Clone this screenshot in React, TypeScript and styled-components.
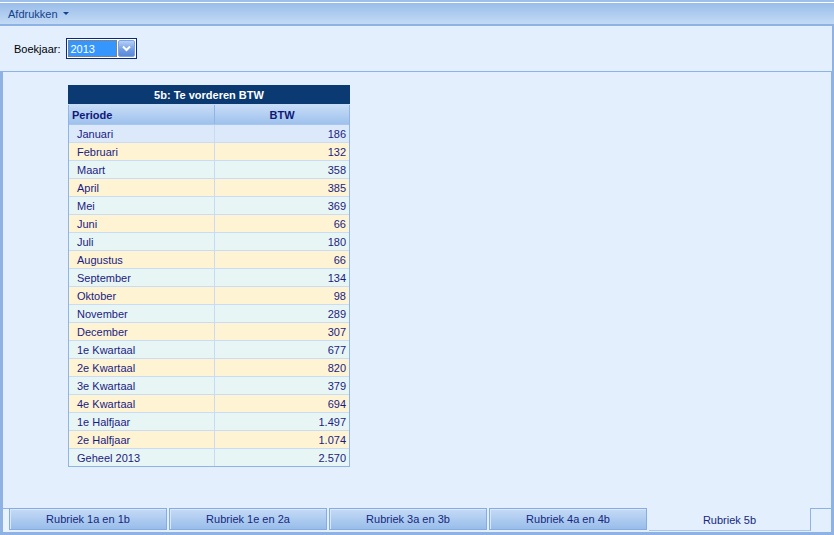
import React from "react";
import styled, { createGlobalStyle } from "styled-components";

const GlobalStyle = createGlobalStyle`
  html, body {
    margin: 0;
    padding: 0;
  }
  body {
    font-family: "Liberation Sans", Arial, sans-serif;
    font-size: 11px;
  }
`;

const Window = styled.div`
  width: 834px;
  height: 535px;
  display: flex;
  flex-direction: column;
  background-color: #e3effd;
  overflow: hidden;
`;

const Toolbar = styled.div`
  height: 21px;
  border-top: 2px solid #9dbfea;
  border-bottom: 2px solid #8db2e3;
  box-shadow: inset 0 1px 0 #ffffff;
  padding-top: 1px;
  display: flex;
  align-items: center;
  padding-left: 8px;
  background: linear-gradient(#97bce9, #c3daf5);
`;

const MenuButton = styled.div`
  display: flex;
  align-items: center;
  gap: 5px;
  color: #15428b;
  font-size: 11px;
`;

const Caret = styled.span`
  width: 0;
  height: 0;
  border-left: 3px solid transparent;
  border-right: 3px solid transparent;
  border-top: 3px solid #15428b;
`;

const FilterBar = styled.div`
  height: 45px;
  border-bottom: 1px solid #8db2e3;
  border-right: 2px solid #8db2e3;
  display: flex;
  align-items: center;
  padding-left: 14px;
  gap: 6px;
  color: #000;
`;

const Combo = styled.div`
  display: flex;
  width: 67px;
  height: 17px;
  border: 1px solid #0a2a7a;
  background: #ffffff;
  padding: 1px;
  gap: 1px;
`;

const ComboValue = styled.div`
  flex: 1;
  display: flex;
  align-items: center;
  padding-left: 2px;
  background: #3597fe;
  color: #ffffff;
  outline: 1px dotted #c07020;
  outline-offset: -1px;
`;

const ComboButton = styled.div`
  width: 17px;
  display: flex;
  align-items: center;
  justify-content: center;
  border: 1px solid #7da3e0;
  box-sizing: border-box;
  border-radius: 2px;
  background: linear-gradient(#b4d0f6, #6f9be3 60%, #5a88d8);
`;

const Content = styled.div`
  flex: 1;
  border-left: 3px solid #8db2e3;
  border-right: 3px solid #8db2e3;
  padding: 13px 0 0 65px;
`;

const Grid = styled.div`
  width: 282px;
  box-sizing: border-box;
  border: 1px solid #8fb4e6;
  border-top: none;
`;

const Title = styled.div`
  height: 19px;
  margin: 0 -1px;
  display: flex;
  align-items: center;
  justify-content: center;
  background: #0b3a73;
  color: #ffffff;
  font-weight: bold;
  border-bottom: 1px solid #c7dcf6;
`;

const Row = styled.div<{ $bg: string }>`
  display: grid;
  grid-template-columns: 146px 1fr;
  height: 17px;
  border-bottom: 1px solid #cadcf3;
  background: ${(p) => p.$bg};
  &:last-child {
    border-bottom: none;
  }
`;

const HeadRow = styled.div`
  display: grid;
  grid-template-columns: 146px 1fr;
  height: 19px;
  background: linear-gradient(#c8ddf7, #9ec1ec);
  border-bottom: 1px solid #a8c6ee;
`;

const HeadCell = styled.div<{ $center?: boolean }>`
  display: flex;
  align-items: center;
  justify-content: ${(p) => (p.$center ? "center" : "flex-start")};
  padding-left: ${(p) => (p.$center ? "0" : "3px")};
  font-weight: bold;
  color: #10187a;
  border-right: 1px solid #8fb4e6;
  &:last-child {
    border-right: none;
  }
`;

const Cell = styled.div<{ $num?: boolean }>`
  display: flex;
  align-items: center;
  justify-content: ${(p) => (p.$num ? "flex-end" : "flex-start")};
  padding: 0 3px 0 8px;
  color: #1a1c82;
  border-right: 1px solid #c8dbf3;
  &:last-child {
    border-right: none;
  }
`;

const TabStrip = styled.div`
  height: 24px;
  display: flex;
  border-left: 3px solid #8db2e3;
  border-right: 3px solid #8db2e3;
  border-bottom: 3px solid #8db2e3;
`;

const TabLead = styled.div<{ $grow?: boolean }>`
  width: 6px;
  flex: ${(p) => (p.$grow ? 1 : "none")};
  border-top: 1px solid #8db2e3;
  background: ${(p) => (p.$grow ? "#e3effd" : "#eaf3fd")};
`;

const Tab = styled.div<{ $active?: boolean }>`
  width: ${(p) => (p.$active ? "162px" : "158px")};
  height: ${(p) => (p.$active ? "23px" : "22px")};
  margin-right: ${(p) => (p.$active ? "0" : "2px")};
  box-sizing: border-box;
  display: flex;
  align-items: center;
  justify-content: center;
  color: #15287e;
  ${(p) =>
    p.$active
      ? `
    background: #e3effd;
    border-right: 1px solid #8db2e3;
    border-bottom: 1px solid #a9c6ee;
    padding-top: 2px;
  `
      : `
    background: linear-gradient(#c5dbf6, #98bdea);
    border: 1px solid #86ade3;
    box-shadow: inset 1px 1px 0 #d8e7fa;
  `}
`;

const rows: [string, string][] = [
  ["Januari", "186"],
  ["Februari", "132"],
  ["Maart", "358"],
  ["April", "385"],
  ["Mei", "369"],
  ["Juni", "66"],
  ["Juli", "180"],
  ["Augustus", "66"],
  ["September", "134"],
  ["Oktober", "98"],
  ["November", "289"],
  ["December", "307"],
  ["1e Kwartaal", "677"],
  ["2e Kwartaal", "820"],
  ["3e Kwartaal", "379"],
  ["4e Kwartaal", "694"],
  ["1e Halfjaar", "1.497"],
  ["2e Halfjaar", "1.074"],
  ["Geheel 2013", "2.570"],
];

const tabs = [
  "Rubriek 1a en 1b",
  "Rubriek 1e en 2a",
  "Rubriek 3a en 3b",
  "Rubriek 4a en 4b",
];

const rowColor = (i: number) =>
  i === 0 ? "#dce9fb" : i % 2 === 1 ? "#fef3d2" : "#e8f5f5";

const App: React.FC = () => {
  return (
    <Window>
      <GlobalStyle />
      <Toolbar>
        <MenuButton>
          Afdrukken <Caret />
        </MenuButton>
      </Toolbar>
      <FilterBar>
        <span>Boekjaar:</span>
        <Combo>
          <ComboValue>2013</ComboValue>
          <ComboButton>
            <svg width="9" height="7" viewBox="0 0 9 7">
              <path
                d="M1 1.5 L4.5 5 L8 1.5"
                fill="none"
                stroke="#ffffff"
                strokeWidth="2"
              />
            </svg>
          </ComboButton>
        </Combo>
      </FilterBar>
      <Content>
        <Grid>
          <Title>5b: Te vorderen BTW</Title>
          <HeadRow>
            <HeadCell>Periode</HeadCell>
            <HeadCell $center>BTW</HeadCell>
          </HeadRow>
          {rows.map(([label, value], i) => (
            <Row key={label} $bg={rowColor(i)}>
              <Cell>{label}</Cell>
              <Cell $num>{value}</Cell>
            </Row>
          ))}
        </Grid>
      </Content>
      <TabStrip>
        <TabLead />
        {tabs.map((t) => (
          <Tab key={t}>{t}</Tab>
        ))}
        <Tab $active>Rubriek 5b</Tab>
        <TabLead $grow />
      </TabStrip>
    </Window>
  );
};

export default App;
